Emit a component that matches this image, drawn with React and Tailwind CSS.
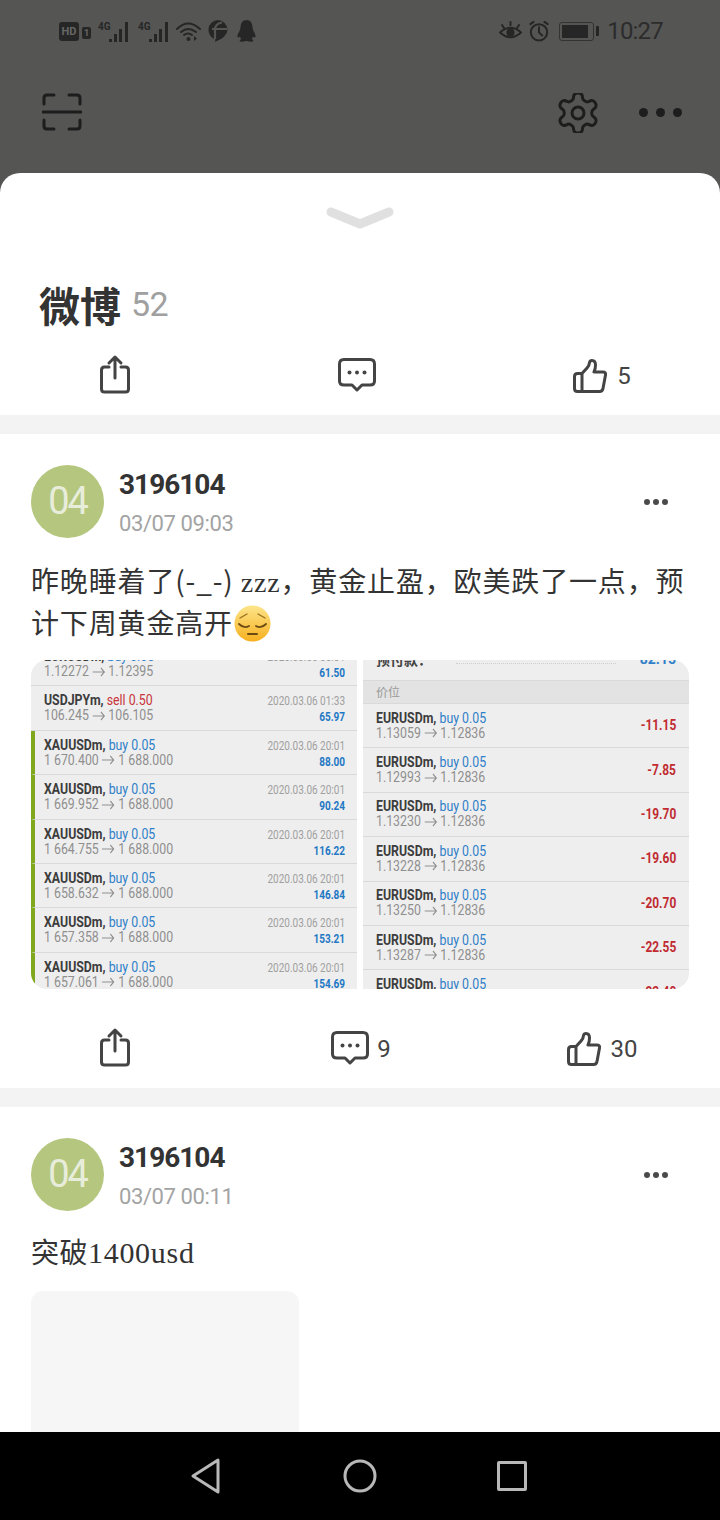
import React from "react";

const roboto = "font-['Roboto',sans-serif]";

const leftRows = [
  { sym: "EURUSDm,", side: "buy 0.05", from: "1.12272", to: "1.12395", time: "2020.03.06 00:01", val: "61.50" },
  { sym: "USDJPYm,", side: "sell 0.50", sell: true, from: "106.245", to: "106.105", time: "2020.03.06 01:33", val: "65.97" },
  { sym: "XAUUSDm,", side: "buy 0.05", bar: true, from: "1 670.400", to: "1 688.000", time: "2020.03.06 20:01", val: "88.00" },
  { sym: "XAUUSDm,", side: "buy 0.05", bar: true, from: "1 669.952", to: "1 688.000", time: "2020.03.06 20:01", val: "90.24" },
  { sym: "XAUUSDm,", side: "buy 0.05", bar: true, from: "1 664.755", to: "1 688.000", time: "2020.03.06 20:01", val: "116.22" },
  { sym: "XAUUSDm,", side: "buy 0.05", bar: true, from: "1 658.632", to: "1 688.000", time: "2020.03.06 20:01", val: "146.84" },
  { sym: "XAUUSDm,", side: "buy 0.05", bar: true, from: "1 657.358", to: "1 688.000", time: "2020.03.06 20:01", val: "153.21" },
  { sym: "XAUUSDm,", side: "buy 0.05", bar: true, from: "1 657.061", to: "1 688.000", time: "2020.03.06 20:01", val: "154.69" },
];

const rightRows = [
  { from: "1.13059", val: "-11.15" },
  { from: "1.12993", val: "-7.85" },
  { from: "1.13230", val: "-19.70" },
  { from: "1.13228", val: "-19.60" },
  { from: "1.13250", val: "-20.70" },
  { from: "1.13287", val: "-22.55" },
  { from: "1.13300", val: "-23.40" },
];

function ShareIcon() {
  return (
    <svg className="mb-[3px]" width="32" height="40" viewBox="0 0 32 40" fill="none" stroke="#444" strokeWidth="3" strokeLinecap="round" strokeLinejoin="round">
      <path d="M10 13H5.5Q2.5 13 2.5 16V35Q2.5 38 5.5 38H26.500Q29.500 38 29.500 35V16Q29.500 13 26.500 13H22" />
      <path d="M16 24V3M10 9L16 3L22 9" />
    </svg>
  );
}

function CommentIcon() {
  return (
    <svg className="mb-[1px]" width="38" height="34" viewBox="0 0 38 34" fill="none" stroke="#444" strokeWidth="3" strokeLinejoin="round">
      <path d="M6 1.500H32Q36.500 1.500 36.500 6V23Q36.500 27 32 27H24L19 32L14 27H6Q1.500 27 1.500 23V6Q1.500 1.500 6 1.500Z" />
      <circle cx="11.500" cy="14.500" r="2" fill="#444" stroke="none" />
      <circle cx="19" cy="14.500" r="2" fill="#444" stroke="none" />
      <circle cx="26.500" cy="14.500" r="2" fill="#444" stroke="none" />
    </svg>
  );
}

function ThumbIcon() {
  return (
    <svg width="34" height="34" viewBox="0 0 34 34" fill="none" stroke="#444" strokeWidth="3" strokeLinejoin="round" strokeLinecap="round">
      <path d="M9 14.500L14 9Q16.500 6 16.500 3.500Q17 1.500 19 1.500Q22.500 1.500 22.500 6Q22.500 10 21 13H30Q33 13 32.500 16L30 29.500Q29.500 32.500 26.500 32.500H4.500Q1.500 32.500 1.500 29.500V17.500Q1.500 14.500 4.500 14.500H9V32.500" />
    </svg>
  );
}

function ActionRow({ comments, likes, extraClass }) {
  return (
    <div className={`grid grid-cols-3 h-[79px] items-center text-[#444] ${roboto} text-[24px] ${extraClass}`}>
      <div className="flex justify-center pr-[10px]"><ShareIcon /></div>
      {comments ? (
        <div className="flex justify-center items-center gap-[8px] pl-[2px]"><CommentIcon /><span>{comments}</span></div>
      ) : (
        <div className="flex justify-center items-center pr-[6px]"><CommentIcon /></div>
      )}
      <div className="flex justify-center items-center gap-[10px] pl-[4px]"><ThumbIcon /><span>{likes}</span></div>
    </div>
  );
}

function PostHeader({ time }) {
  return (
    <div className="flex items-start pt-[31px] pl-[31px] pr-[52px]">
      <div className={`w-[73px] h-[73px] rounded-full bg-[#b5c77f] flex items-center justify-center text-[#e8eddb] text-[38px] tracking-[-2px] ${roboto}`}>04</div>
      <div className={`flex flex-col ml-[15px] pt-[2px] ${roboto}`}>
        <div className="text-[28px] leading-[36px] font-bold text-[#333] tracking-[-1px]">3196104</div>
        <div className="text-[22px] leading-[28px] mt-[7px] text-[#a3a3a3] tracking-[-0.4px]">{time}</div>
      </div>
      <div className="ml-auto self-center flex gap-[3px]">
        <span className="w-[6px] h-[6px] rounded-full bg-[#4a4a4a]"></span>
        <span className="w-[6px] h-[6px] rounded-full bg-[#4a4a4a]"></span>
        <span className="w-[6px] h-[6px] rounded-full bg-[#4a4a4a]"></span>
      </div>
    </div>
  );
}

function PriceLine({ from, to }) {
  return (
    <div className="text-[14.5px] text-[#8f8f8f] whitespace-nowrap flex items-center">
      <span>{from}</span>
      <svg className="mx-[4px]" width="15" height="10" viewBox="0 0 15 10" fill="none" stroke="#8f8f8f" strokeWidth="1.200">
        <path d="M0 5H14M10 1L14 5L10 9" />
      </svg>
      <span>{to}</span>
    </div>
  );
}

function LeftRow({ row }) {
  return (
    <div className={`h-[44.4px] shrink-0 flex justify-between border-b border-[#d9d9d9] pr-[12px] pt-[7px] leading-[15px] ${row.bar ? "border-l-[4px] border-l-[#7fa81e] pl-[9px]" : "pl-[13px]"}`}>
      <div className="origin-left scale-x-[0.85]">
        <div className="text-[14.5px] whitespace-nowrap"><span className="font-bold text-[#3c3c3c]">{row.sym}</span> <span className={row.sell ? "text-[#c8343a]" : "text-[#2f80c8]"}>{row.side}</span></div>
        <PriceLine from={row.from} to={row.to} />
      </div>
      <div className="text-right origin-right scale-x-[0.8]">
        <div className="text-[12.5px] text-[#a0a0a0] whitespace-nowrap">{row.time}</div>
        <div className="text-[12.5px] font-bold text-[#1f78c4] mt-[1px]">{row.val}</div>
      </div>
    </div>
  );
}

function RightRow({ row }) {
  return (
    <div className="h-[44.4px] shrink-0 flex justify-between items-center border-b border-[#d9d9d9] pl-[13px] pr-[13px] leading-[15px]">
      <div className="origin-left scale-x-[0.85]">
        <div className="text-[14.5px] whitespace-nowrap"><span className="font-bold text-[#3c3c3c]">EURUSDm,</span> <span className="text-[#2f80c8]">buy 0.05</span></div>
        <PriceLine from={row.from} to="1.12836" />
      </div>
      <div className="text-[14.5px] font-bold text-[#c02a30] origin-right scale-x-[0.82]">{row.val}</div>
    </div>
  );
}

function TradeImage() {
  return (
    <div className={`mx-[31px] mt-[16px] h-[329px] rounded-[16px] overflow-hidden flex gap-[6px] ${roboto}`}>
      <div className="w-[326px] h-full bg-[#eeeeee] overflow-hidden flex flex-col">
        <div className="-mt-[18px]">
          {leftRows.map((row, i) => <LeftRow key={i} row={row} />)}
        </div>
      </div>
      <div className="w-[326px] h-full bg-[#eeeeee] overflow-hidden flex flex-col">
        <div className="h-[21px] shrink-0 flex items-start justify-between border-b border-[#d9d9d9] pl-[13px] pr-[13px] overflow-hidden">
          <span className="-mt-[9px] text-[14px] font-bold text-[#444] leading-[16px] font-['Noto_Sans_CJK_SC',sans-serif] whitespace-nowrap">预付款：</span>
          <span className="flex-1 mx-[24px] mt-[3px] border-t border-dotted border-[#cfcfcf]"></span>
          <span className="-mt-[9px] text-[14px] font-bold text-[#2f80c8] leading-[16px]">82.15</span>
        </div>
        <div className="h-[23px] shrink-0 bg-[#e3e3e3] border-b border-[#d9d9d9] pl-[13px] flex items-center text-[12px] text-[#999] font-['Noto_Sans_CJK_SC',sans-serif]">价位</div>
        {rightRows.map((row, i) => <RightRow key={i} row={row} />)}
      </div>
    </div>
  );
}

function PensiveEmoji() {
  return (
    <svg className="inline-block align-[0px] -my-[8px] ml-[1px]" width="37" height="37" viewBox="0 0 37 37">
      <defs>
        <linearGradient id="face" x1="0" y1="0" x2="0" y2="1">
          <stop offset="0" stopColor="#fde58a" />
          <stop offset="1" stopColor="#f6b01f" />
        </linearGradient>
      </defs>
      <circle cx="18.500" cy="18.500" r="18" fill="url(#face)" />
      <path d="M5 19Q10 24 15 21M22 21Q27 24 32 19" fill="none" stroke="#6b4a14" strokeWidth="1.800" strokeLinecap="round" />
      <path d="M6 13L13 9M31 13L24 9" fill="none" stroke="#9a7020" strokeWidth="1.400" strokeLinecap="round" />
      <path d="M14 29H23" fill="none" stroke="#6b4a14" strokeWidth="2" strokeLinecap="round" />
    </svg>
  );
}

function Band() {
  return <div className="h-[19px] bg-[#f3f3f3] shrink-0"></div>;
}

function StatusBar() {
  return (
    <div className={`h-[62px] flex items-center pl-[59px] pr-[57px] text-[#262626] ${roboto}`}>
      <span className="h-[19px] w-[20px] rounded-[3px] bg-[#262626] text-[#666] text-[11px] font-bold leading-[19px] text-center">HD</span>
      <span className="ml-[3px] mt-[3px] h-[12px] w-[9px] rounded-[2px] bg-[#262626] text-[#666] text-[9px] font-bold leading-[12px] text-center">1</span>
      {[0, 1].map((i) => (
        <svg key={i} className="ml-[7px]" width="33" height="21" viewBox="0 0 33 21" fill="#262626">
          <text x="0" y="9" fontSize="10" fontWeight="700" fontFamily="Roboto">4G</text>
          <rect x="11" y="18" width="3" height="3" />
          <rect x="16" y="13" width="3" height="8" />
          <rect x="21" y="8" width="3" height="13" />
          <rect x="27" y="1" width="3" height="20" />
        </svg>
      ))}
      <svg className="ml-[5px]" width="25" height="21" viewBox="0 0 25 21" fill="none" stroke="#262626" strokeWidth="2" strokeLinecap="round">
        <path d="M1 8Q12 -3 24 8M5 11Q12 5 20 11M8 14Q12 11 16 14" />
        <circle cx="12.500" cy="18" r="2" fill="#262626" stroke="none" />
        <path d="M18 15V20L21 17.500Z" fill="#262626" stroke="none" />
      </svg>
      <svg className="ml-[6px]" width="21" height="22" viewBox="0 0 21 22">
        <path d="M10.500 0A10 10 0 0 1 20.500 10Q20 17 8 22L8.500 19.500A10 10 0 0 1 10.500 0Z" fill="#262626" />
        <path d="M8 19V10Q8 3.500 15 2.500M5 9H20" fill="none" stroke="#555554" strokeWidth="2.200" />
      </svg>
      <svg className="ml-[9px]" width="19" height="22" viewBox="0 0 19 22" fill="#262626">
        <path d="M9.500 0Q15 0 15.500 7Q15.500 9 16.500 11Q19 15 18.500 17Q17.500 18 16 16.500Q15.500 18.500 14.500 19Q17 20 16 21.500Q13 22 10 21H9Q6 22 3 21.500Q2 20 4.500 19Q3.500 18.500 3 16.500Q1.500 18 0.500 17Q0 15 2.500 11Q3.500 9 3.500 7Q4 0 9.500 0Z" />
      </svg>

      <svg className="ml-auto" width="23" height="20" viewBox="0 0 23 20" fill="none" stroke="#262626" strokeWidth="2" strokeLinecap="round">
        <path d="M1 11.500Q11.500 2 22 11.500Q11.500 21 1 11.500Z" />
        <circle cx="11.500" cy="11.500" r="4" fill="#262626" stroke="none" />
        <path d="M3 4L5 7M11.500 1V4M20 4L18 7" />
      </svg>
      <svg className="ml-[7px]" width="20" height="22" viewBox="0 0 22 24" fill="none" stroke="#262626" strokeWidth="2.200" strokeLinecap="round">
        <circle cx="11" cy="13.500" r="9" />
        <path d="M11 8V13.500L14.500 17M1.500 4.500L5 2M20.500 4.500L17 2" />
      </svg>
      <div className="ml-[10px] h-[19px] w-[35px] rounded-[3px] border border-[#333] p-[2px]">
        <div className="h-full w-[26px] bg-[#262626]"></div>
      </div>
      <div className="ml-[2px] h-[10px] w-[3px] bg-[#262626] rounded-r-[1px]"></div>
      <span className="ml-[8px] text-[24px] text-[#2c2c2c] tracking-[-0.8px]">10:27</span>
    </div>
  );
}

function Toolbar() {
  return (
    <div className="h-[111px] flex items-start pl-[42px] pr-[38px] pt-[31px]">
      <svg width="40" height="38" viewBox="0 0 40 38" fill="none" stroke="#1d1d1d" strokeWidth="3" strokeLinecap="round">
        <path d="M12 2H5Q2 2 2 5V11M27 2H35Q38 2 38 5V11M2 27V33Q2 36 5 36H12M38 27V33Q38 36 35 36H27M1 19H39" />
      </svg>
      <svg className="ml-auto" width="40" height="40" viewBox="2 2 20 20" fill="none" stroke="#1d1d1d" strokeWidth="1.500" strokeLinecap="round" strokeLinejoin="round">
        <path d="M12.220 2h-.440a2 2 0 0 0-2 2v.180a2 2 0 0 1-1 1.730l-.430.250a2 2 0 0 1-2 0l-.150-.080a2 2 0 0 0-2.730.730l-.220.380a2 2 0 0 0 .730 2.730l.150.100a2 2 0 0 1 1 1.720v.510a2 2 0 0 1-1 1.740l-.150.090a2 2 0 0 0-.730 2.730l.220.380a2 2 0 0 0 2.730.730l.150-.080a2 2 0 0 1 2 0l.430.250a2 2 0 0 1 1 1.730V20a2 2 0 0 0 2 2h.440a2 2 0 0 0 2-2v-.180a2 2 0 0 1 1-1.730l.430-.250a2 2 0 0 1 2 0l.150.080a2 2 0 0 0 2.730-.730l.220-.390a2 2 0 0 0-.730-2.730l-.150-.080a2 2 0 0 1-1-1.740v-.500a2 2 0 0 1 1-1.740l.150-.090a2 2 0 0 0 .730-2.730l-.220-.380a2 2 0 0 0-2.730-.730l-.150.080a2 2 0 0 1-2 0l-.430-.250a2 2 0 0 1-1-1.730V4a2 2 0 0 0-2-2z" />
        <circle cx="12" cy="12" r="3" />
      </svg>
      <div className="ml-[41px] mt-[15px] flex gap-[8px]">
        <span className="w-[9px] h-[9px] rounded-full bg-[#1d1d1d]"></span>
        <span className="w-[9px] h-[9px] rounded-full bg-[#1d1d1d]"></span>
        <span className="w-[9px] h-[9px] rounded-full bg-[#1d1d1d]"></span>
      </div>
    </div>
  );
}

function NavBar() {
  return (
    <div className="h-[88px] shrink-0 bg-black flex items-center pl-[190px]">
      <svg width="32" height="36" viewBox="0 0 32 36" fill="none" stroke="#b8b8b8" strokeWidth="3" strokeLinejoin="round">
        <path d="M28 2V34L3 18Z" />
      </svg>
      <svg className="ml-[120px]" width="36" height="36" viewBox="0 0 36 36" fill="none" stroke="#b8b8b8" strokeWidth="3">
        <circle cx="18" cy="18" r="15" />
      </svg>
      <div className="ml-[119px] w-[30px] h-[30px] rounded-[2px] border-[3px] border-[#b8b8b8]"></div>
    </div>
  );
}

export default function App() {
  return (
    <div className="w-[720px] h-[1520px] overflow-hidden bg-[#555554] flex flex-col font-['Noto_Sans_CJK_SC',sans-serif]">
      <StatusBar />
      <Toolbar />
      <div className="flex-1 min-h-0 overflow-hidden bg-white rounded-t-[20px]">
        <div className="h-[99px] pt-[32px] flex justify-center">
          <svg width="68" height="26" viewBox="0 0 68 26" fill="none" stroke="#e0e0e0" strokeWidth="9" strokeLinecap="round" strokeLinejoin="round">
            <path d="M5 7L34 19L63 7" />
          </svg>
        </div>
        <div className="h-[64px] flex items-center pl-[39px]">
          <span className="text-[41px] font-bold text-[#333] leading-none">微博</span>
          <span className={`ml-[10px] text-[34px] tracking-[-0.5px] text-[#a0a0a0] ${roboto}`}>52</span>
        </div>
        <ActionRow likes="5" extraClass="" />
        <Band />

        <PostHeader time="03/07 09:03" />
        <div className="mt-[21px] px-[31px] h-[85px] text-[28px] leading-[42px] text-[#333] tracking-[0.85px]">
          <div className="h-[42px] whitespace-nowrap">昨晚睡着了(-_-) <span className="font-['Liberation_Serif',serif] leading-none">zzz</span>，黄金止盈，欧美跌了一点，预</div>
          <div className="h-[42px] whitespace-nowrap">计下周黄金高开<PensiveEmoji /></div>
        </div>
        <TradeImage />
        <ActionRow comments="9" likes="30" extraClass="mt-[20px]" />
        <Band />

        <PostHeader time="03/07 00:11" />
        <div className="mt-[19px] px-[31px] h-[42px] text-[28px] leading-[42px] text-[#333] tracking-[0.5px]">
          突破<span className="font-['Liberation_Serif',serif] text-[30px] tracking-[0.7px] leading-none">1400usd</span>
        </div>
        <div className="mt-[19px] ml-[31px] w-[268px] h-[200px] rounded-[12px] bg-[#f6f6f6]"></div>
      </div>
      <NavBar />
    </div>
  );
}
